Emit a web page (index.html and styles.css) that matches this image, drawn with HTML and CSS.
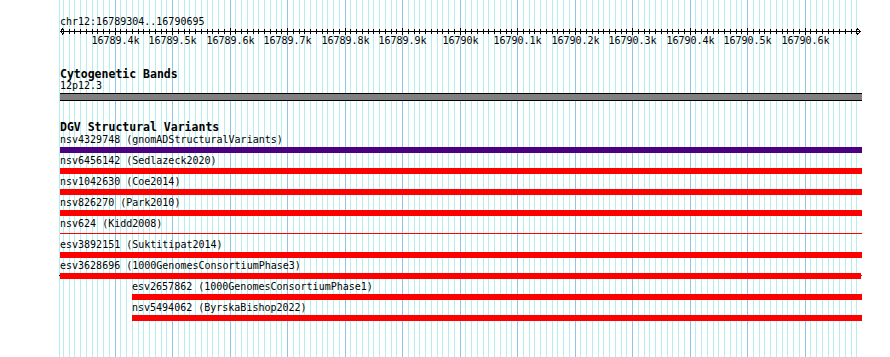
FILE: index.html
```html
<!DOCTYPE html>
<html lang="en">
<head>
<meta charset="UTF-8">
<title>chr12:16789304..16790695</title>
<link rel="stylesheet" href="styles.css">
</head>
<body>

<div class="view">
<svg class="grid" id="grid" width="890" height="357"></svg>

<div class="tracks">
<div class="loc">chr12:16789304..16790695</div>
<svg class="ruler" id="ruler" width="890" height="18"></svg>

<div class="track-title bands-title">Cytogenetic Bands</div>
<div class="band-label">12p12.3</div>
<div class="band"></div>

<div class="track-title dgv-title">DGV Structural Variants</div>
<div class="feat">
<div class="label">nsv4329748 (gnomADStructuralVariants)</div>
<div class="bar gnomad"></div>
</div>
<div class="feat">
<div class="label">nsv6456142 (Sedlazeck2020)</div>
<div class="bar"></div>
</div>
<div class="feat">
<div class="label">nsv1042630 (Coe2014)</div>
<div class="bar"></div>
</div>
<div class="feat">
<div class="label">nsv826270 (Park2010)</div>
<div class="bar"></div>
</div>
<div class="feat">
<div class="label">nsv624 (Kidd2008)</div>
<div class="bar thin"></div>
</div>
<div class="feat">
<div class="label">esv3892151 (Suktitipat2014)</div>
<div class="bar"></div>
</div>
<div class="feat">
<div class="label">esv3628696 (1000GenomesConsortiumPhase3)</div>
<div class="bar overhang"></div>
</div>
<div class="feat indent">
<div class="label">esv2657862 (1000GenomesConsortiumPhase1)</div>
<div class="bar"></div>
</div>
<div class="feat indent">
<div class="label">nsv5494062 (ByrskaBishop2022)</div>
<div class="bar"></div>
</div>
</div>
</div>

<script>
let select= (x)=> document.querySelector(x);
let ns= "http://www.w3.org/2000/svg";
let start= 16789304, end= 16790695, scale= 0.575;
let px= (pos)=> Math.floor(60 + (pos-start)*scale) + 0.5;
let kb= (pos)=> pos%1000==0 ? (pos/1000)+"k" : (pos/1000).toFixed(1)+"k";

function add(svg, tag, attrs, text){
let el= document.createElementNS(ns, tag);
for (let k in attrs) el.setAttribute(k, attrs[k]);
if (text) el.textContent= text;
svg.appendChild(el);
}

let grid= select("#grid"), ruler= select("#ruler");

// left edge of the view
add(grid, "line", {x1:59.5, y1:0, x2:59.5, y2:357, class:"minor"});
// axis, y=31 on the page is y=3 in the ruler
add(ruler, "line", {x1:60, y1:3.5, x2:861, y2:3.5, class:"axis"});
add(ruler, "polyline", {points:"63,0.5 60.5,3.5 63,6.5", class:"axis"});
add(ruler, "polyline", {points:"857,0.5 860.5,3.5 857,6.5", class:"axis"});

for (let p= Math.ceil(start/10)*10; p<=end; p+=10){
let x= px(p), major= p%100==0;
add(grid, "line", {x1:x, y1:0, x2:x, y2:357, class: major ? "major" : "minor"});
add(ruler, "line", {x1:x, y1: major ? 0 : 1, x2:x, y2: major ? 7 : 6, class:"axis"});
if (major) add(ruler, "text", {x:x, y:16, class:"tick-label"}, kb(p));
}
</script>
</body>
</html>
```

FILE: styles.css
```css
body{
margin: 0;
background: #fff;
font-family: "DejaVu Sans Mono", "Liberation Mono", monospace;
font-size: 10px;
color: #000;
}

.view{
position: relative;
width: 890px;
height: 357px;
overflow: hidden;
}

.grid{
position: absolute;
top: 0; left: 0;
shape-rendering: crispEdges;
}
.grid .minor{stroke: #b4eeee; stroke-width: 1;}
.grid .major{stroke: #8ec6e6; stroke-width: 1;}

.tracks{
position: relative;
padding: 16px 0 0 60px;
width: 802px;
}

.loc{
line-height: 12px;
height: 12px;
}

.ruler{
display: block;
margin-left: -60px;
shape-rendering: crispEdges;
}
.ruler .axis{stroke: #000; stroke-width: 1; fill: none;}
.tick-label{
font-family: "DejaVu Sans Mono", monospace;
font-size: 10px;
text-anchor: middle;
fill: #000;
}

.track-title{
font-weight: bold;
font-size: 11.5px;
line-height: 12px;
height: 12px;
}
.bands-title{margin-top: 22px;}
.dgv-title{margin-top: 20px;}

.band-label{
line-height: 12px;
height: 12px;
}

.band{
margin-top: 1px;
height: 6px;
background: #808080;
border-top: 1px solid #000;
border-bottom: 1px solid #000;
}

.feat{
height: 21px;
}
.feat.indent{padding-left: 72px;}

.label{
line-height: 14px;
height: 14px;
white-space: nowrap;
}

.bar{
height: 6px;
background: #f00;
}
.bar.gnomad{background: #4b0082;}
.bar.thin{
height: 1px;
margin-top: 2px;
}
.bar.overhang{
position: relative;
width: 801px;
}
.bar.overhang::before,
.bar.overhang::after{
content: "";
position: absolute;
top: 2px;
width: 1px;
height: 1px;
}
.bar.overhang::before{left: -1px; background: #000;}
.bar.overhang::after{right: -1px; background: #f00;}
```
